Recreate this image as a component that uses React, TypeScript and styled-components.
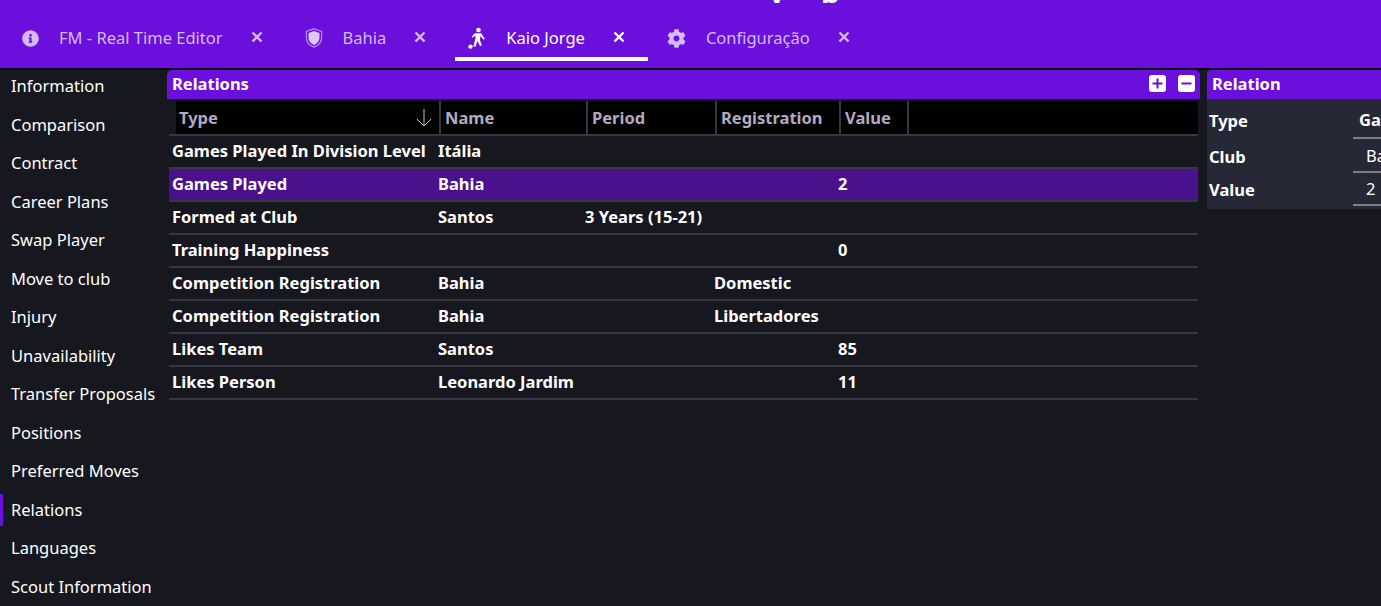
import React from 'react';
import styled, { createGlobalStyle } from 'styled-components';
import { FaCog, FaInfoCircle } from 'react-icons/fa';

const GlobalStyle = createGlobalStyle`
  html, body {
    margin: 0;
    height: 100%;
    overflow: hidden;
    background: #16171f;
  }
  body {
    font-family: "Noto Sans", "Open Sans", sans-serif;
    font-size: 16.5px;
    color: #fff;
  }
`;

const Page = styled.div`
  width: 1381px;
  height: 606px;
  overflow: hidden;
  background: #16171f;
`;

const Header = styled.header`
  height: 68px;
  background: #6a0fdc;
  border-bottom: 2px solid #0b0b12;
  overflow: hidden;
`;

const TitleStrip = styled.div`
  height: 22px;
  margin-top: -19px;
  overflow: hidden;
  padding-left: 768px;
  font-size: 30px;
  line-height: 22px;
  font-weight: 700;
  word-spacing: 28px;
  white-space: nowrap;
`;

const TabBar = styled.nav`
  display: flex;
  gap: 6px;
  margin-top: 17px;
  padding-left: 8px;
`;

const Tab = styled.div<{ $active?: boolean }>`
  display: flex;
  align-items: center;
  height: 36px;
  padding: 0 23px 1px 12px;
  color: ${p => (p.$active ? '#ffffff' : '#d3bcf7')};
  border-bottom: 4px solid ${p => (p.$active ? '#ffffff' : 'transparent')};
  &:last-child {
    margin-left: 1px;
  }
`;

const TabIcon = styled.span`
  display: flex;
  justify-content: center;
  align-items: center;
  width: 20px;
  height: 20px;
  margin-right: 19px;
  font-size: 17px;
`;

const TabLabel = styled.span`
  line-height: 22px;
  margin-right: 28px;
`;

const CloseGlyph = styled.svg`
  width: 12px;
  height: 12px;
  margin-top: -3px;
`;

const Body = styled.div`
  display: flex;
  align-items: flex-start;
`;

const Sidebar = styled.aside`
  display: flex;
  flex-direction: column;
  gap: 6.5px;
  width: 167px;
  flex: none;
`;

const SideItem = styled.div<{ $active?: boolean }>`
  height: 32px;
  line-height: 32px;
  padding-left: ${p => (p.$active ? '8px' : '11px')};
  white-space: nowrap;
  border-left: ${p => (p.$active ? '3px solid #6a0fdc' : 'none')};
`;

const MainPanel = styled.section`
  width: 1033px;
  flex: none;
`;

const TitleBar = styled.div`
  display: flex;
  align-items: center;
  justify-content: space-between;
  box-sizing: border-box;
  height: 29px;
  padding: 0 5px 2px;
  background: #6a0fdc;
  border-radius: 5px 5px 0 0;
  font-weight: 700;
`;

const TitleActions = styled.div`
  display: flex;
  gap: 12px;
`;

const ActionButton = styled.svg`
  display: block;
  width: 17px;
  height: 17px;
`;

const TableHead = styled.div`
  display: grid;
  grid-template-columns: 265px 147px 129px 124px 68px 1fr;
  height: 33px;
  margin: 2px 2px 0 9px;
  background: #000;
`;

const HeadRule = styled.div`
  height: 2px;
  margin: 0 2px;
  background: #38373f;
`;

const HeadCell = styled.div`
  display: flex;
  align-items: center;
  justify-content: space-between;
  box-sizing: border-box;
  padding: 0 7px 0 3px;
  font-weight: 700;
  color: #b3a9c2;
  &:not(:first-child) {
    padding-left: 4px;
  }
  &:not(:last-child) {
    border-right: 2px solid #38373f;
  }
`;

const Row = styled.div<{ $selected?: boolean }>`
  display: grid;
  grid-template-columns: 266px 147px 129px 124px 1fr;
  align-items: center;
  box-sizing: border-box;
  height: 33px;
  margin: 0 2px;
  padding: 0 0 1px 3px;
  background: ${p => (p.$selected ? '#4a118c' : 'transparent')};
  border-bottom: 2px solid #38373f;
  font-weight: 700;
  line-height: 22px;
  white-space: nowrap;
`;

const DetailPanel = styled.section`
  margin-left: 7px;
  width: 174px;
  flex: none;
  overflow: hidden;
  background: #272836;
  padding-bottom: 3px;
`;

const DetailTitle = styled(TitleBar)`
  border-radius: 5px 0 0 0;
`;

const DetailRow = styled.div<{ $tall?: boolean }>`
  display: grid;
  grid-template-columns: 144px 1fr;
  box-sizing: border-box;
  height: ${p => (p.$tall ? '40px' : '33.5px')};
  padding: ${p => (p.$tall ? '3px 0 0 2px' : '1px 0 0 2px')};
  font-weight: 700;
`;

const DetailLabel = styled.div`
  display: flex;
  align-items: center;
`;

const DetailValue = styled.div<{ $inset: number; $bold?: boolean }>`
  display: flex;
  align-items: center;
  padding-left: ${p => p.$inset}px;
  font-weight: ${p => (p.$bold ? 700 : 400)};
  border-bottom: 2px solid #7d7c85;
  white-space: nowrap;
  overflow: hidden;
`;

const menu = [
  'Information', 'Comparison', 'Contract', 'Career Plans', 'Swap Player', 'Move to club', 'Injury',
  'Unavailability', 'Transfer Proposals', 'Positions', 'Preferred Moves', 'Relations', 'Languages', 'Scout Information',
];

const rows = [
  ['Games Played In Division Level', 'Itália', '', '', ''],
  ['Games Played', 'Bahia', '', '', '2'],
  ['Formed at Club', 'Santos', '3 Years (15-21)', '', ''],
  ['Training Happiness', '', '', '', '0'],
  ['Competition Registration', 'Bahia', '', 'Domestic', ''],
  ['Competition Registration', 'Bahia', '', 'Libertadores', ''],
  ['Likes Team', 'Santos', '', '', '85'],
  ['Likes Person', 'Leonardo Jardim', '', '', '11'],
];

const Close = ({ color }: { color: string }) => (
  <CloseGlyph viewBox="0 0 12 12">
    <path d="M1.5 1.5l9 9M10.5 1.5l-9 9" stroke={color} strokeWidth="2.4" fill="none" />
  </CloseGlyph>
);

const ShieldIcon = () => (
  <svg width="18" height="20" viewBox="0 0 18 20">
    <path d="M9 .8l7.6 2.6v6c0 4.6-3 8-7.6 9.8C4.4 17.4 1.4 14 1.4 9.4v-6z" fill="none" stroke="#b48cf0" strokeWidth="1.3" />
    <path d="M9 3l5.5 1.900v4.500c0 3.500-2.200 6-5.500 7.500-3.300-1.500-5.500-4-5.500-7.500V4.900z" fill="#dcc8fa" />
  </svg>
);

const PlayerIcon = () => (
  <svg width="20" height="22" viewBox="0 0 20 22" fill="#fff">
    <circle cx="11.500" cy="3" r="2.300" />
    <path d="M7.800 6.200h6.400l3.600 5.800-1.300.8-3-3.800-.6 4 2 5.500-1.900.6-2.600-5.100-2 5.700-2.100-.5 2.300-8.200-.5-2.500-2.300 2.200-1.100-1z" />
    <circle cx="3.500" cy="19.600" r="2.200" />
  </svg>
);

const SortArrow = () => (
  <svg width="16" height="18" viewBox="0 0 16 18">
    <path d="M8 0v17M1 10l7 7 7-7" stroke="#c4c4c8" strokeWidth="1" fill="none" />
  </svg>
);

export default function App() {
  return (
    <Page>
      <GlobalStyle />
      <Header>
        <TitleStrip>y p</TitleStrip>
        <TabBar>
          <Tab>
            <TabIcon><FaInfoCircle /></TabIcon>
            <TabLabel>FM - Real Time Editor</TabLabel>
            <Close color="#d3bcf7" />
          </Tab>
          <Tab>
            <TabIcon><ShieldIcon /></TabIcon>
            <TabLabel>Bahia</TabLabel>
            <Close color="#d3bcf7" />
          </Tab>
          <Tab $active>
            <TabIcon><PlayerIcon /></TabIcon>
            <TabLabel>Kaio Jorge</TabLabel>
            <Close color="#fff" />
          </Tab>
          <Tab>
            <TabIcon><FaCog size={19} /></TabIcon>
            <TabLabel>Configuração</TabLabel>
            <Close color="#d3bcf7" />
          </Tab>
        </TabBar>
      </Header>
      <Body>
        <Sidebar>
          {menu.map(m => (
            <SideItem key={m} $active={m === 'Relations'}>{m}</SideItem>
          ))}
        </Sidebar>
        <MainPanel>
          <TitleBar>
            <span>Relations</span>
            <TitleActions>
              <ActionButton viewBox="0 0 17 17">
                <rect width="17" height="17" rx="3" fill="#fff" />
                <path d="M3.5 8.5h10M8.5 3.5v10" stroke="#6a0fdc" strokeWidth="2" />
              </ActionButton>
              <ActionButton viewBox="0 0 17 17">
                <rect width="17" height="17" rx="3" fill="#fff" />
                <path d="M3.5 8.5h10" stroke="#6a0fdc" strokeWidth="2" />
              </ActionButton>
            </TitleActions>
          </TitleBar>
          <TableHead>
            <HeadCell>Type<SortArrow /></HeadCell>
            <HeadCell>Name</HeadCell>
            <HeadCell>Period</HeadCell>
            <HeadCell>Registration</HeadCell>
            <HeadCell>Value</HeadCell>
            <HeadCell />
          </TableHead>
          <HeadRule />
          {rows.map((r, i) => (
            <Row key={i} $selected={i === 1}>
              {r.map((c, j) => <span key={j}>{c}</span>)}
            </Row>
          ))}
        </MainPanel>
        <DetailPanel>
          <DetailTitle>Relation</DetailTitle>
          <DetailRow $tall>
            <DetailLabel>Type</DetailLabel>
            <DetailValue $inset={6} $bold>Games Played</DetailValue>
          </DetailRow>
          <DetailRow>
            <DetailLabel>Club</DetailLabel>
            <DetailValue $inset={13}>Bahia</DetailValue>
          </DetailRow>
          <DetailRow>
            <DetailLabel>Value</DetailLabel>
            <DetailValue $inset={13}>2</DetailValue>
          </DetailRow>
        </DetailPanel>
      </Body>
    </Page>
  );
}
